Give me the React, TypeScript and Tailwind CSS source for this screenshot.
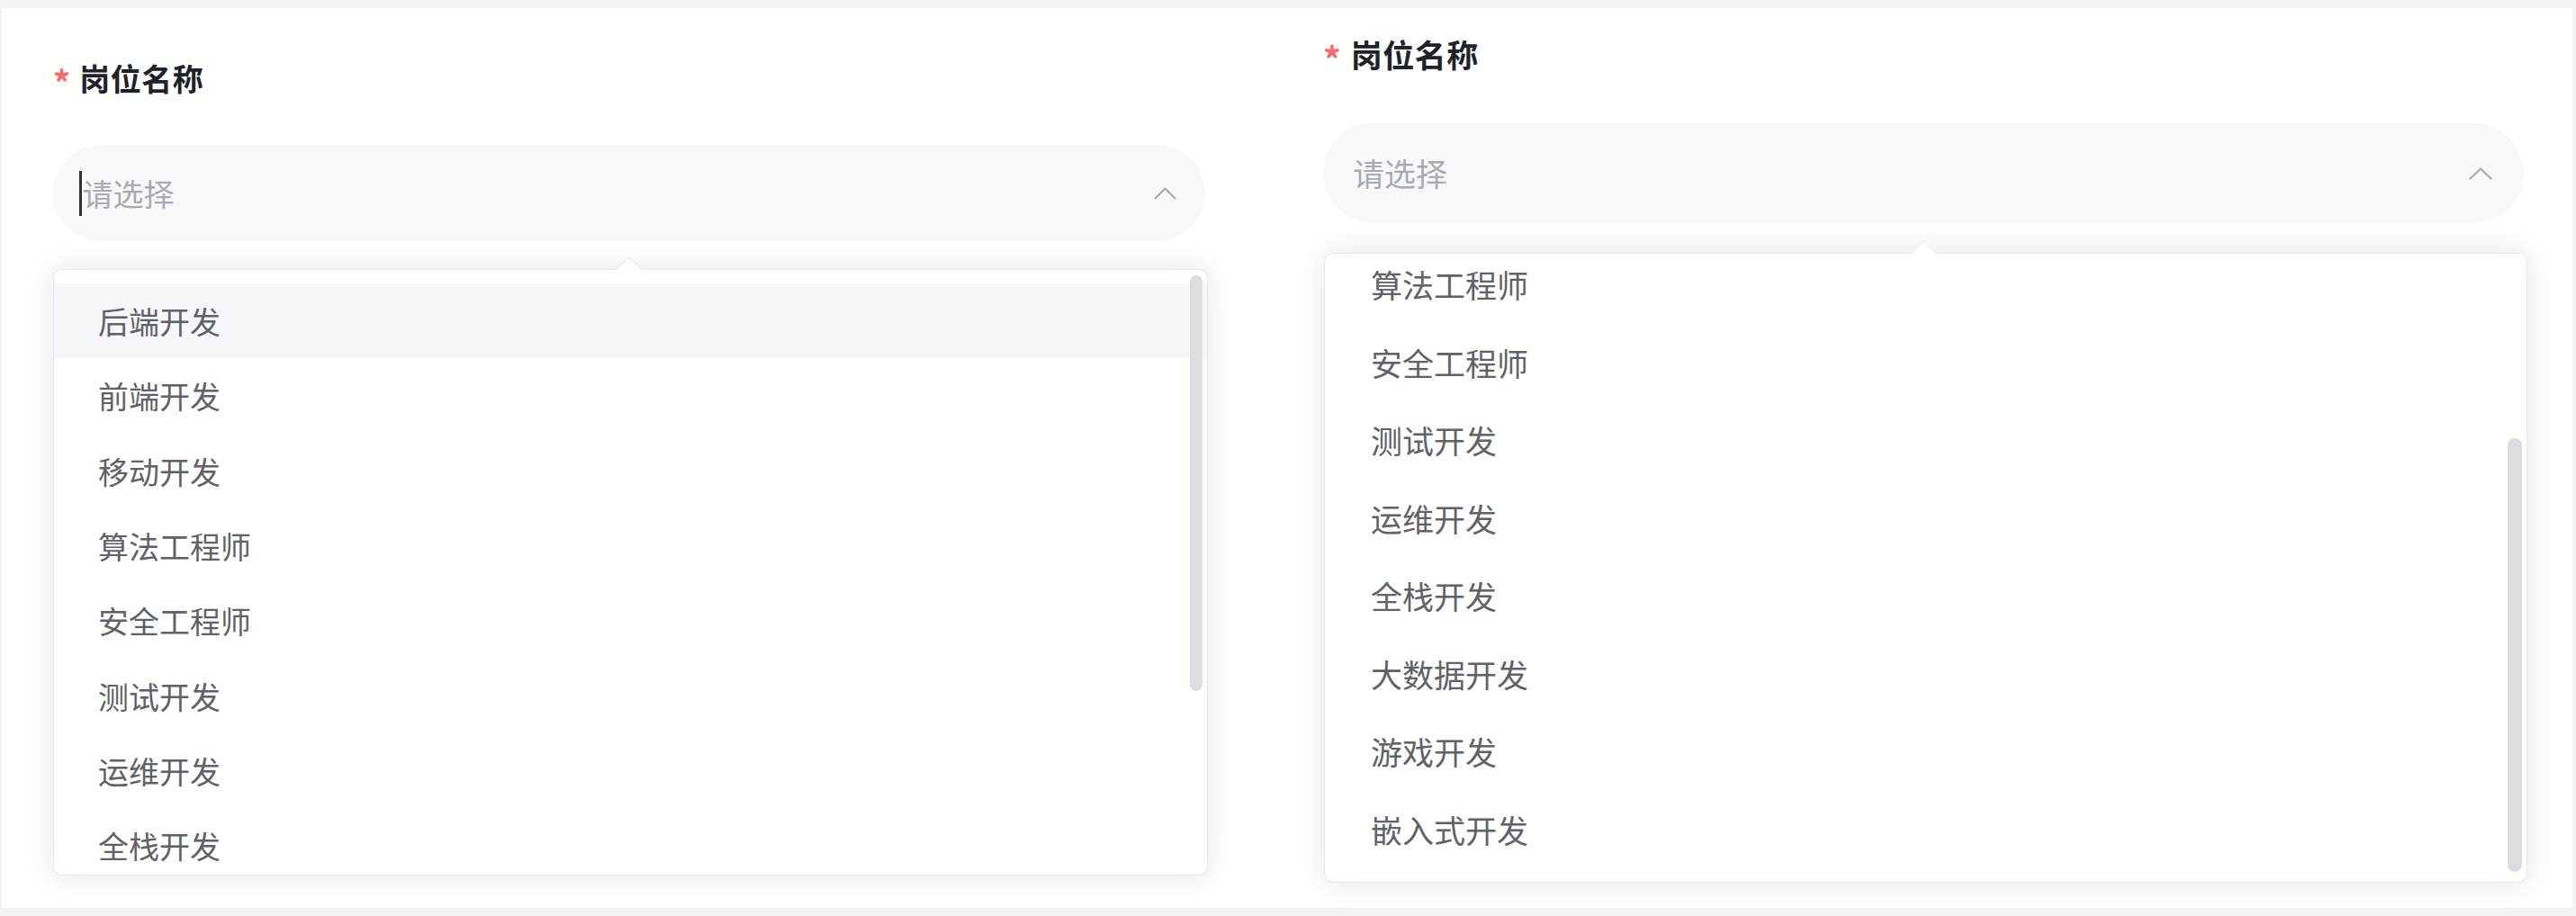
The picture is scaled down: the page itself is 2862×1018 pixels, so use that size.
import React from "react";

const FONT = { fontFamily: '"Noto Sans CJK SC", "Noto Sans", sans-serif' };

const ITEMS = [
  "后端开发",
  "前端开发",
  "移动开发",
  "算法工程师",
  "安全工程师",
  "测试开发",
  "运维开发",
  "全栈开发",
  "大数据开发",
  "游戏开发",
  "嵌入式开发",
];

function Chevron({ w, h }: { w: number; h: number }) {
  return (
    <svg width={w} height={h} viewBox={`0 0 ${w} ${h}`} fill="none">
      <polyline
        points={`1.5,${h - 1.5} ${w / 2},1.5 ${w - 1.5},${h - 1.5}`}
        stroke="#a8abb2"
        strokeWidth="2.2"
        strokeLinecap="round"
        strokeLinejoin="round"
      />
    </svg>
  );
}

function LeftColumn() {
  return (
    <div className="w-[1429px] shrink-0 pl-[57px] pt-[54px]">
      <div className="flex items-start h-[48px] leading-[48px]">
        <span className="text-[38px] font-bold text-[#f56c6c] mr-[10px] leading-[48px] pt-[4px]">*</span>
        <span className="text-[34px] font-bold text-[#1f2329] tracking-[0.5px]">岗位名称</span>
      </div>
      <div className="mt-[50px] w-[1280px] h-[107px] rounded-full bg-[#f7f8fa] flex items-center pl-[29px] pr-[32px]">
        <div className="w-[2.5px] h-[50px] bg-[#303133] mr-[1px]" />
        <span className="flex-1 text-[34px] text-[#a8abb2]">请选择</span>
        <Chevron w={25} h={14} />
      </div>
      <div className="relative mt-[31px] w-[1283px] h-[674px] bg-white border border-[#e4e7ed] rounded-[10px] shadow-[0_0_36px_rgba(0,0,0,0.10)]">
        <div className="absolute -top-[11px] left-[629px] w-[20px] h-[20px] rotate-45 bg-white border-l border-t border-[#e4e7ed] rounded-tl-[2px]" />
        <div className="h-full overflow-hidden rounded-[10px] relative">
          <div className="pt-[15px]">
            {ITEMS.map((t, i) => (
              <div
                key={t}
                className={`h-[83.3px] flex items-center pl-[49px] text-[34px] text-[#5f6266] ${
                  i === 0 ? "bg-[#f5f7fa]" : ""
                }`}
              >
                {t}
              </div>
            ))}
          </div>
          <div className="absolute right-[5px] top-[6px] w-[14px] h-[462px] rounded-full bg-[#dcdde0]" />
        </div>
      </div>
    </div>
  );
}

function RightColumn() {
  return (
    <div className="flex-1 pl-[39px] pt-[26px]">
      <div className="flex items-start h-[50px] leading-[50px]">
        <span className="text-[39px] font-bold text-[#f56c6c] mr-[11px] leading-[50px] pt-[4px]">*</span>
        <span className="text-[35px] font-bold text-[#1f2329] tracking-[0.5px]">岗位名称</span>
      </div>
      <div className="mt-[52px] w-[1334px] h-[111px] rounded-full bg-[#f7f8fa] flex items-center pl-[33px] pr-[35px]">
        <span className="flex-1 text-[35px] text-[#a8abb2]">请选择</span>
        <Chevron w={26} h={14} />
      </div>
      <div className="relative mt-[33px] ml-[1px] w-[1337px] h-[700px] bg-white border border-[#e4e7ed] rounded-[10px] shadow-[0_0_36px_rgba(0,0,0,0.10)]">
        <div className="absolute -top-[11px] left-[655px] w-[21px] h-[21px] rotate-45 bg-white border-l border-t border-[#e4e7ed] rounded-tl-[2px]" />
        <div className="h-full overflow-hidden rounded-[10px] relative flex flex-col justify-end">
          <div className="shrink-0 py-[15px]">
            {ITEMS.map((t) => (
              <div
                key={t}
                className="h-[86.5px] flex items-center pl-[51px] text-[35px] text-[#5f6266]"
              >
                {t}
              </div>
            ))}
          </div>
          <div className="absolute right-[5px] bottom-[11px] w-[16px] h-[482px] rounded-full bg-[#dcdde0]" />
        </div>
      </div>
    </div>
  );
}

export default function App() {
  return (
    <div style={FONT} className="w-[2862px] h-[1018px] bg-[#f4f4f5] pt-[9px] pl-[2px]">
      <div className="w-[2856px] h-[1000px] bg-white flex">
        <LeftColumn />
        <RightColumn />
      </div>
    </div>
  );
}
